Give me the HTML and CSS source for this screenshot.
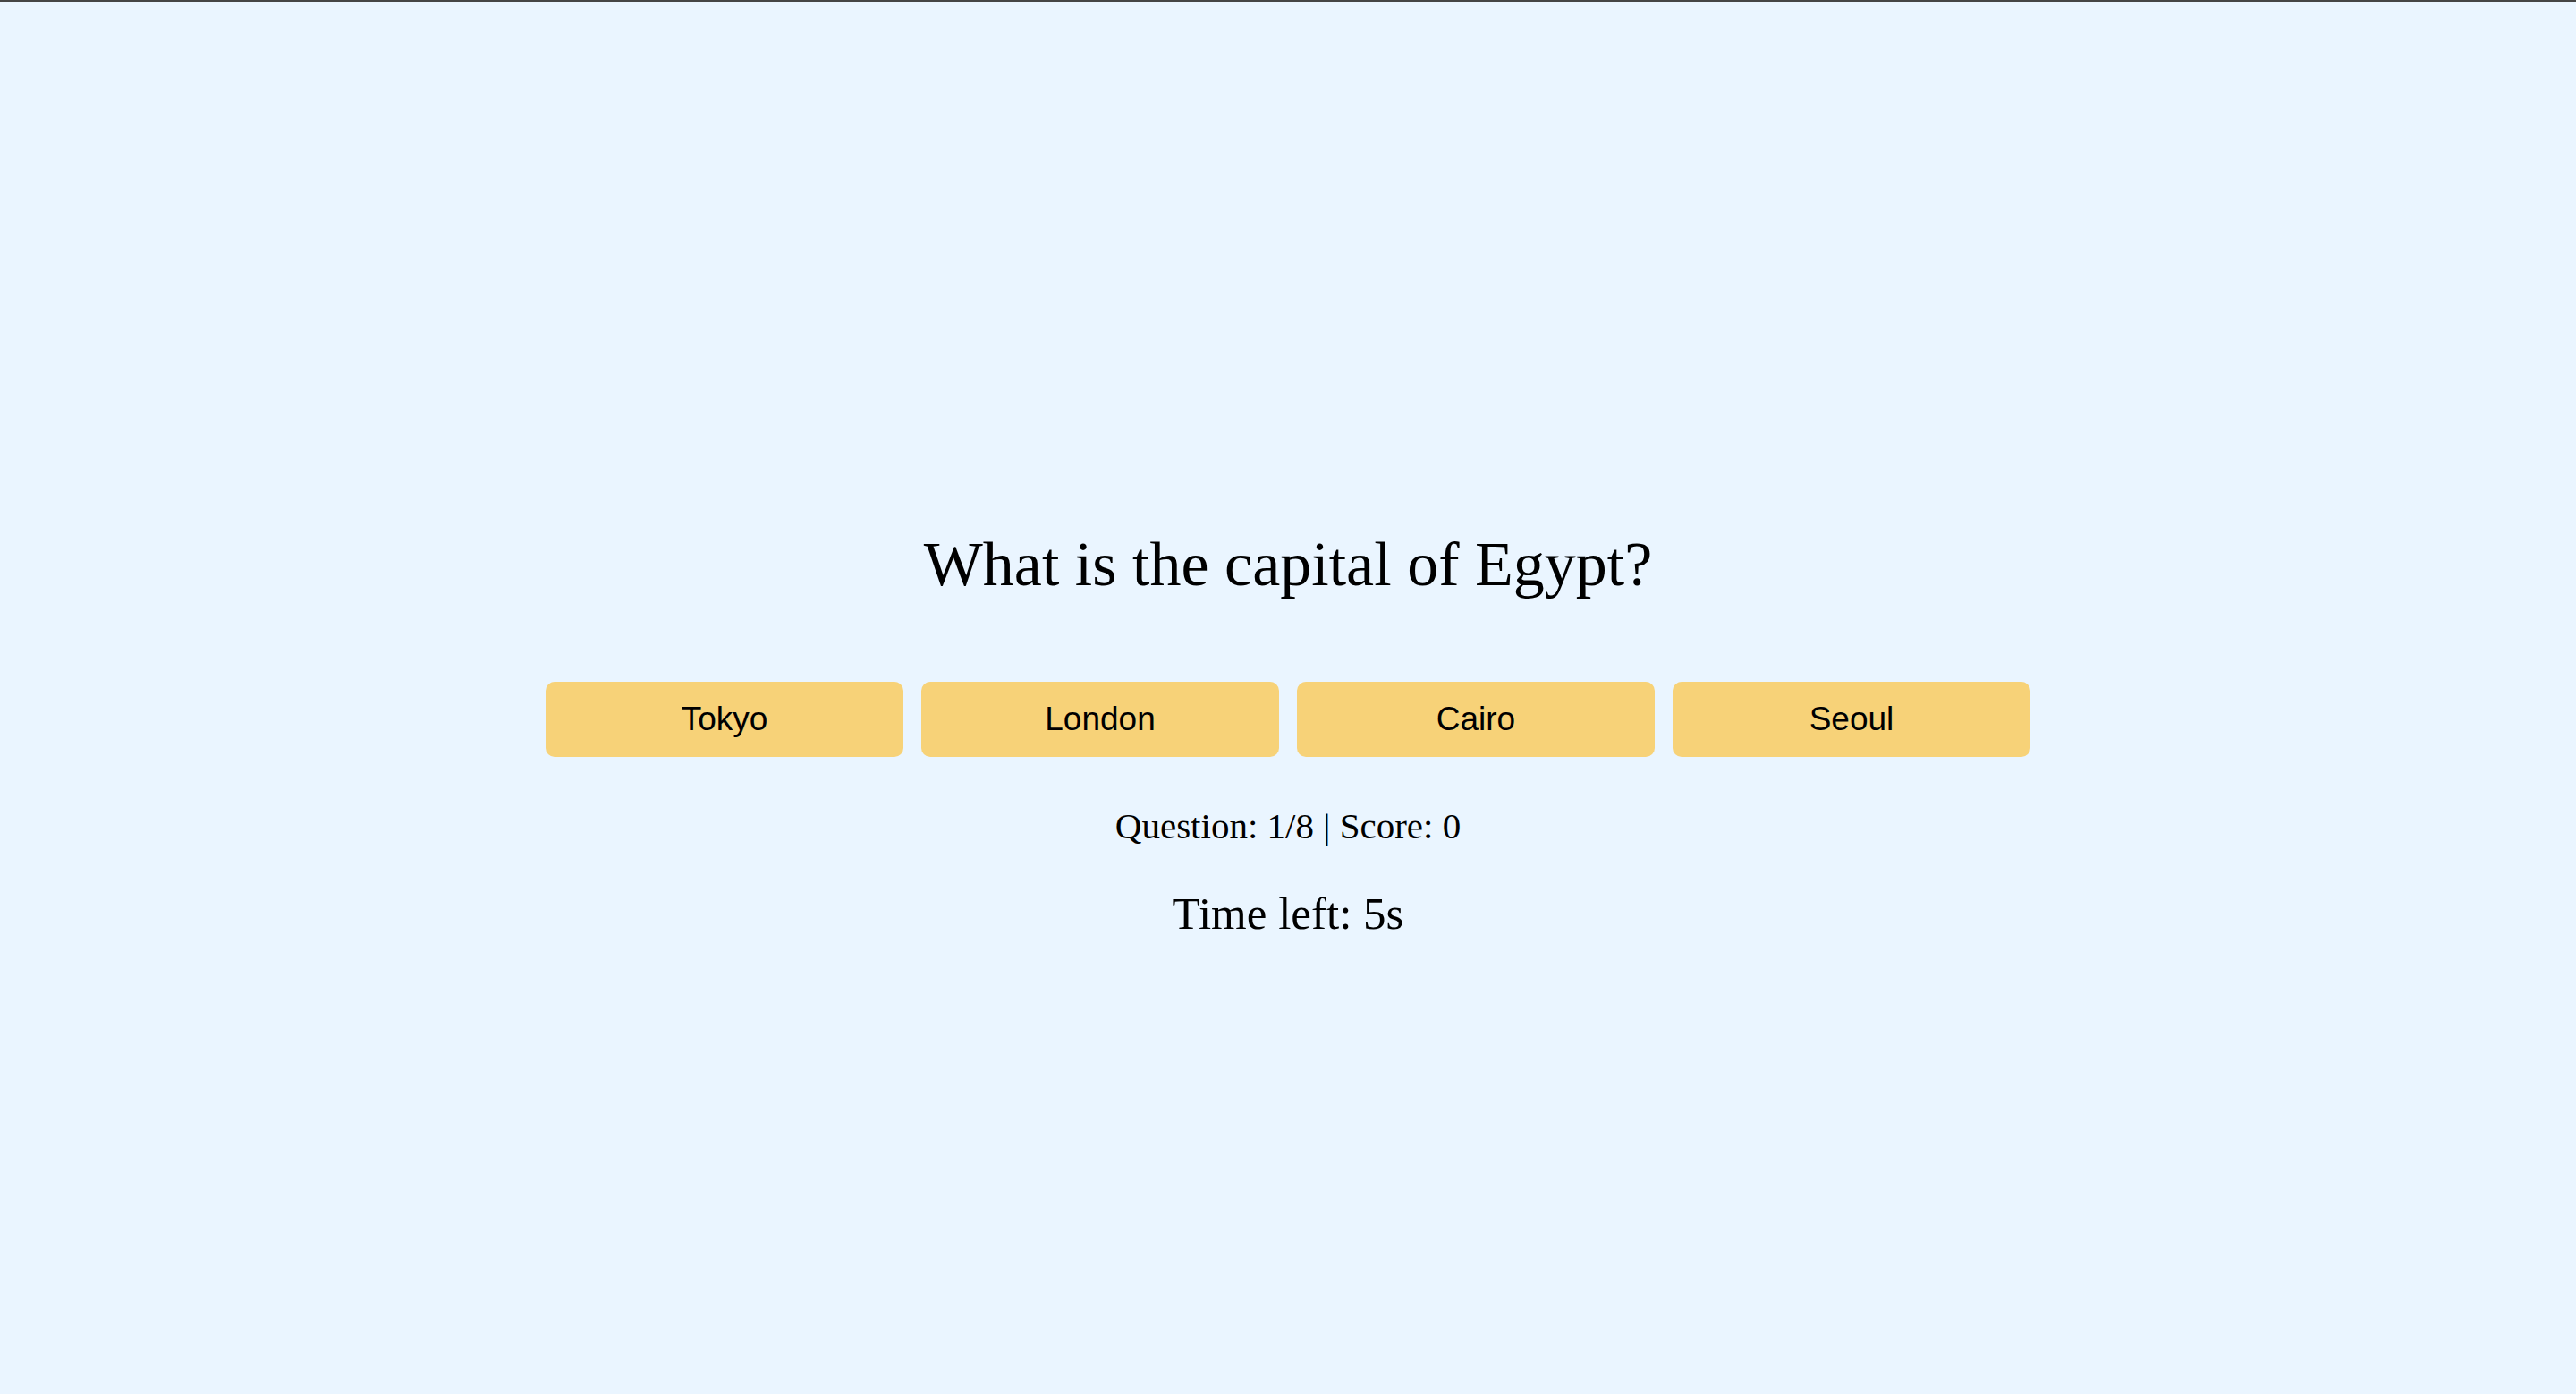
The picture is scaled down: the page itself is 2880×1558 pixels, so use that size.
FILE: index.html
```html
<!DOCTYPE html>
<html lang="en">
<head>
<meta charset="utf-8">
<title>Capital Quiz</title>
<link rel="stylesheet" href="styles.css">
</head>
<body>
<main class="quiz">
  <h1 class="question">What is the capital of Egypt?</h1>
  <div class="options">
    <button class="option">Tokyo</button>
    <button class="option">London</button>
    <button class="option">Cairo</button>
    <button class="option">Seoul</button>
  </div>
  <p class="status">Question: 1/8 | Score: 0</p>
  <p class="timer">Time left: 5s</p>
</main>
</body>
</html>
```

FILE: styles.css
```css
html, body {
  margin: 0;
  padding: 0;
}

body {
  background: #eaf5ff;
  border-top: 2px solid #454545;
  min-height: 1558px;
  box-sizing: border-box;
  font-family: "Liberation Serif", "DejaVu Serif", serif;
  color: #000;
}

.quiz {
  display: flex;
  flex-direction: column;
  align-items: center;
  padding-top: 589px;
}

.question {
  margin: 0;
  font-size: 70px;
  line-height: 80px;
  font-weight: 400;
}

.options {
  display: flex;
  gap: 20px;
  margin-top: 91px;
}

.option {
  width: 400px;
  height: 84px;
  border: none;
  border-radius: 10px;
  background: #f7d278;
  font-family: "Liberation Sans", Arial, sans-serif;
  font-size: 37px;
  color: #000;
  padding: 0;
}

.status {
  margin: 53px 0 0;
  font-size: 41px;
  line-height: 48px;
}

.timer {
  margin: 46px 0 0;
  font-size: 51px;
  line-height: 56px;
}
```
